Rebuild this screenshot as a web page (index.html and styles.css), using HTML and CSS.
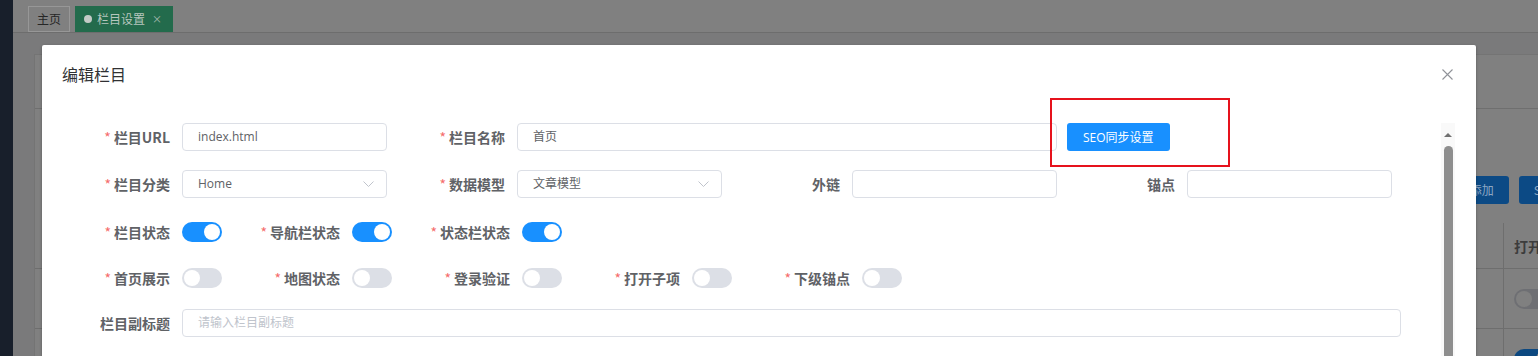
FILE: index.html
```html
<!DOCTYPE html>
<html lang="zh-CN">
<head>
<meta charset="utf-8">
<title>栏目设置</title>
<link rel="stylesheet" href="styles.css">
</head>
<body>
<div class="app">
  <aside class="sidebar"></aside>
  <main class="main">
    <nav class="tabs">
      <span class="tab">主页</span>
      <span class="tab tab-active"><i class="tab-dot"></i>栏目设置<span class="tab-x">×</span></span>
    </nav>
    <div class="content">
      <section class="card">
        <div class="card-head"></div>
        <div class="toolbar">
          <span class="bg-btn">＋ 添加</span>
          <span class="bg-btn">S</span>
        </div>
        <div class="bg-table">
          <div class="bg-cell"></div><div class="bg-cell bg-th">打开</div>
          <div class="bg-cell bg-row"></div><div class="bg-cell bg-row"><span class="bg-sw"></span></div>
          <div class="bg-cell bg-row"></div><div class="bg-cell bg-row"><span class="bg-sw bg-sw-on"></span></div>
        </div>
      </section>
    </div>
  </main>
</div>

<div class="dialog">
  <header class="dlg-head">
    <span class="dlg-title">编辑栏目</span>
    <svg class="dlg-close" width="11" height="11" viewBox="0 0 11 11"><path d="M0.5 0.5L10.5 10.5M10.5 0.5L0.5 10.5" stroke="#909399" stroke-width="1.1" fill="none"/></svg>
  </header>
  <div class="dlg-body">
    <form class="form">
      <div class="row grid4 mb19">
        <div class="field"><label class="lbl req">栏目URL</label><div class="inp">index.html</div></div>
        <div class="field span2"><label class="lbl req">栏目名称</label><div class="inp">首页</div></div>
        <div class="field"><button type="button" class="btn-primary">SEO同步设置</button></div>
      </div>
      <div class="row grid4 mb20">
        <div class="field"><label class="lbl req">栏目分类</label><div class="inp sel">Home<svg class="chev" width="11" height="6" viewBox="0 0 11 6"><path d="M0.5 0.5L5.5 5.5L10.5 0.5" stroke="#c0c4cc" fill="none"/></svg></div></div>
        <div class="field"><label class="lbl req">数据模型</label><div class="inp sel">文章模型<svg class="chev" width="11" height="6" viewBox="0 0 11 6"><path d="M0.5 0.5L5.5 5.5L10.5 0.5" stroke="#c0c4cc" fill="none"/></svg></div></div>
        <div class="field"><label class="lbl">外链</label><div class="inp"></div></div>
        <div class="field"><label class="lbl">锚点</label><div class="inp"></div></div>
      </div>
      <div class="row grid5 mb18">
        <div class="field"><label class="lbl req">栏目状态</label><span class="sw sw-on"></span></div>
        <div class="field"><label class="lbl req">导航栏状态</label><span class="sw sw-on"></span></div>
        <div class="field"><label class="lbl req">状态栏状态</label><span class="sw sw-on"></span></div>
      </div>
      <div class="row grid5 mb17">
        <div class="field"><label class="lbl req">首页展示</label><span class="sw"></span></div>
        <div class="field"><label class="lbl req">地图状态</label><span class="sw"></span></div>
        <div class="field"><label class="lbl req">登录验证</label><span class="sw"></span></div>
        <div class="field"><label class="lbl req">打开子项</label><span class="sw"></span></div>
        <div class="field"><label class="lbl req">下级锚点</label><span class="sw"></span></div>
      </div>
      <div class="row">
        <div class="field"><label class="lbl">栏目副标题</label><div class="inp inp-full ph">请输入栏目副标题</div></div>
      </div>
    </form>
    <div class="scrollbar">
      <span class="scroll-up"></span>
      <span class="scroll-thumb"></span>
    </div>
  </div>
  <div class="highlight"></div>
</div>
</body>
</html>
```

FILE: styles.css
```css
html, body {
  margin: 0;
  padding: 0;
}
body {
  width: 1538px;
  height: 356px;
  overflow: hidden;
  position: relative;
  font-family: "Open Sans", "Noto Sans CJK SC", sans-serif;
  background: #7a7a7b;
}

/* ---------- dimmed background page ---------- */
.app {
  display: flex;
  height: 356px;
}
.sidebar {
  width: 13px;
  flex: none;
  background: #181f2b;
}
.main {
  flex: 1;
  min-width: 0;
  display: flex;
  flex-direction: column;
  overflow: hidden;
}
.tabs {
  height: 36px;
  box-sizing: border-box;
  background: #808080;
  border-bottom: 1px solid #6d6d6d;
  display: flex;
  gap: 5px;
  padding: 6px 0 0 15px;
  font-family: "Noto Sans CJK SC", sans-serif;
}
.tab {
  height: 26px;
  box-sizing: border-box;
  border: 1px solid #979797;
  padding: 0 8px;
  font-size: 12px;
  line-height: 24px;
  color: #262626;
  display: flex;
  align-items: center;
}
.tab-active {
  background: #236b4c;
  border-color: #236b4c;
  color: #b6c6be;
  padding: 0 10px 0 8px;
}
.tab-dot {
  width: 8px;
  height: 8px;
  border-radius: 50%;
  background: #c3cac6;
  margin-right: 5px;
}
.tab-x {
  font-size: 10px;
  margin-left: 7px;
  color: #a9bab1;
}
.content {
  flex: 1;
  padding: 21px 0 0 21px;
}
.card {
  height: 100%;
  background: #808080;
  border: 1px solid #747474;
  border-right: 0;
  white-space: nowrap;
}
.card-head {
  height: 53px;
  border-bottom: 1px solid #6f6f6f;
}
.toolbar {
  display: flex;
  gap: 10px;
  margin-top: 67px;
  padding-left: 1405px;
}
.bg-btn {
  height: 28px;
  line-height: 28px;
  padding: 0 15px;
  border-radius: 3px;
  background: #0c4a85;
  color: #8ca7c4;
  font-size: 12px;
  font-family: "Noto Sans CJK SC", sans-serif;
}
.bg-table {
  display: grid;
  grid-template-columns: 1469px 200px;
  grid-template-rows: 46px 60px 60px;
  margin-top: 19px;
}
.bg-cell {
  border-right: 1px solid #6e6e6e;
  border-bottom: 1px solid #6e6e6e;
  display: flex;
  align-items: center;
  padding-left: 10px;
}
.bg-th {
  font-size: 14px;
  font-weight: 700;
  color: #3c3c3c;
  font-family: "Noto Sans CJK SC", sans-serif;
}
.bg-sw {
  width: 40px;
  height: 20px;
  border-radius: 10px;
  background: #6e6f73;
  position: relative;
}
.bg-sw::after {
  content: "";
  position: absolute;
  top: 2px;
  left: 2px;
  width: 16px;
  height: 16px;
  border-radius: 50%;
  background: #808080;
}
.bg-sw-on {
  background: #0c4880;
}
.bg-sw-on::after {
  left: 22px;
}

/* ---------- dialog ---------- */
.dialog {
  position: absolute;
  left: 42px;
  top: 45px;
  width: 1434px;
  height: 311px;
  background: #fff;
  border-radius: 2px 2px 0 0;
  box-shadow: 0 1px 3px rgba(0, 0, 0, 0.3);
}
.dlg-head {
  height: 78px;
  box-sizing: border-box;
  padding: 17px 23px 0 20px;
  display: flex;
  justify-content: space-between;
  align-items: flex-start;
}
.dlg-title {
  font-family: "Noto Sans CJK SC", sans-serif;
  font-size: 16px;
  line-height: 24px;
  color: #303133;
}
.dlg-close {
  margin-top: 7px;
}
.dlg-body {
  display: flex;
  height: 233px;
}
.form {
  flex: 1;
  margin: 0;
  padding-left: 10px;
}
.row {
  height: 28px;
}
.mb17 { margin-bottom: 17px; }
.mb18 { margin-bottom: 18px; }
.mb19 { margin-bottom: 19px; }
.mb20 { margin-bottom: 20px; }
.grid4 {
  display: grid;
  grid-template-columns: repeat(4, 335px);
}
.grid5 {
  display: grid;
  grid-template-columns: repeat(5, 170px);
}
.span2 {
  grid-column: span 2;
}
.field {
  display: flex;
  align-items: center;
  height: 28px;
}
.lbl {
  width: 118px;
  flex: none;
  margin-right: 12px;
  text-align: right;
  font-family: "Noto Sans CJK SC", sans-serif;
  font-size: 14px;
  font-weight: 700;
  color: #606266;
  white-space: nowrap;
}
.req::before {
  content: "*";
  color: #f56c6c;
  font-weight: 400;
  margin-right: 3px;
}
.inp {
  flex: 1;
  height: 28px;
  box-sizing: border-box;
  border: 1px solid #dcdfe6;
  border-radius: 4px;
  padding: 0 15px;
  font-size: 12px;
  line-height: 26px;
  color: #606266;
  display: flex;
  align-items: center;
  justify-content: space-between;
  white-space: nowrap;
}
.sel {
  padding-right: 12px;
}
.inp-full {
  flex: none;
  width: 1219px;
}
.ph {
  color: #c0c4cc;
}
.btn-primary {
  margin-left: 10px;
  height: 28px;
  padding: 0 16px;
  border: 0;
  border-radius: 3px;
  background: #1890ff;
  color: #fff;
  font-family: "Open Sans", "Noto Sans CJK SC", sans-serif;
  font-size: 12px;
}
.sw {
  width: 40px;
  height: 20px;
  flex: none;
  border-radius: 10px;
  background: #dcdfe6;
  position: relative;
}
.sw::after {
  content: "";
  position: absolute;
  top: 2px;
  left: 2px;
  width: 16px;
  height: 16px;
  border-radius: 50%;
  background: #fff;
}
.sw-on {
  background: #1890ff;
}
.sw-on::after {
  left: 22px;
}
.scrollbar {
  width: 14px;
  margin-right: 21px;
  background: #f9f9f9;
  display: flex;
  flex-direction: column;
  align-items: center;
}
.scroll-up {
  margin-top: 10px;
  width: 0;
  height: 0;
  border-left: 4px solid transparent;
  border-right: 4px solid transparent;
  border-bottom: 4px solid #707070;
}
.scroll-thumb {
  margin-top: 9px;
  flex: 1;
  width: 9px;
  border-radius: 5px 5px 0 0;
  background: #8e8e8e;
}
.highlight {
  position: absolute;
  left: 1008px;
  top: 53px;
  width: 180px;
  height: 69px;
  box-sizing: border-box;
  border: 2px solid #e6121c;
}
```
